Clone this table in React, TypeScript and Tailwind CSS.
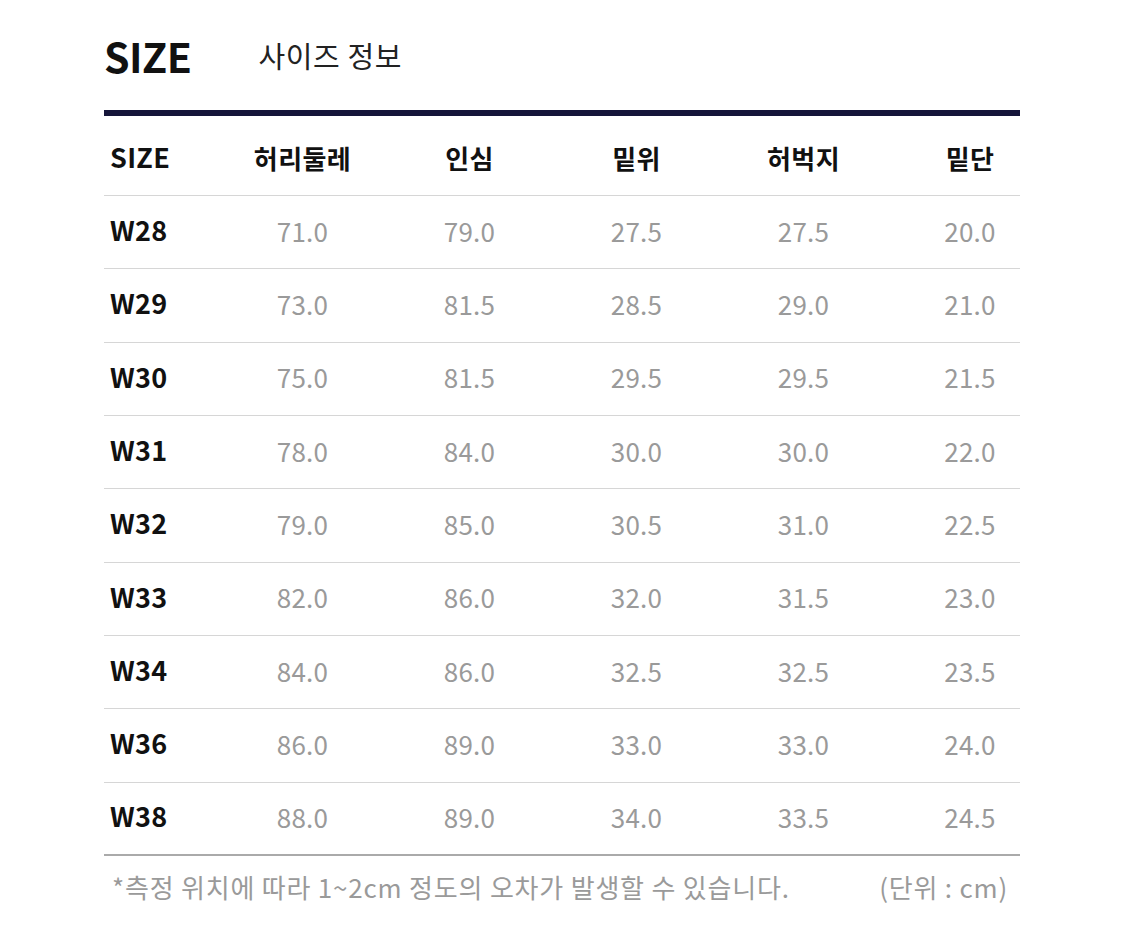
import React from "react";

const rows: [string, string, string, string, string, string][] = [
  ["W28", "71.0", "79.0", "27.5", "27.5", "20.0"],
  ["W29", "73.0", "81.5", "28.5", "29.0", "21.0"],
  ["W30", "75.0", "81.5", "29.5", "29.5", "21.5"],
  ["W31", "78.0", "84.0", "30.0", "30.0", "22.0"],
  ["W32", "79.0", "85.0", "30.5", "31.0", "22.5"],
  ["W33", "82.0", "86.0", "32.0", "31.5", "23.0"],
  ["W34", "84.0", "86.0", "32.5", "32.5", "23.5"],
  ["W36", "86.0", "89.0", "33.0", "33.0", "24.0"],
  ["W38", "88.0", "89.0", "34.0", "33.5", "24.5"],
];

const headers = ["허리둘레", "인심", "밑위", "허벅지", "밑단"];

const font = { fontFamily: '"Noto Sans CJK KR", "Noto Sans", sans-serif' };

export default function App() {
  return (
    <div className="w-[1125px] h-[950px] bg-white" style={font}>
      <div className="pl-[104px] pt-[27px] w-[1020px]">
        <div className="flex items-center h-[56px]">
          <span className="text-[41px] font-bold text-[#111] leading-none tracking-[-0.5px]">SIZE</span>
          <span className="ml-[67px] text-[29px] text-[#222] leading-none tracking-[0.6px]">사이즈 정보</span>
        </div>
        <div className="mt-[27px] h-[6px] bg-[#15153a]" />
        <div className="grid grid-cols-[115px_167px_167px_167px_167px_1fr] h-[80px] items-center border-b border-[#d6d6d6] pt-[4px]">
          <div className="pl-[6px] text-[27px] font-bold text-[#111] tracking-[0.3px]">SIZE</div>
          {headers.map((h, i) => (
            <div
              key={h}
              className={
                i === 4
                  ? "pl-[33px] text-center text-[26px] font-bold text-[#111] tracking-[0.4px]"
                  : "text-center text-[26px] font-bold text-[#111] tracking-[0.4px]"
              }
            >
              {h}
            </div>
          ))}
        </div>
        {rows.map((r, ri) => (
          <div
            key={r[0]}
            className={
              ri === rows.length - 1
                ? "grid grid-cols-[115px_167px_167px_167px_167px_1fr] h-[73.33px] items-center border-b-2 border-[#aaaaaa] pb-[4px]"
                : "grid grid-cols-[115px_167px_167px_167px_167px_1fr] h-[73.33px] items-center border-b border-[#d6d6d6] pb-[4px]"
            }
          >
            <div className="pl-[6px] text-[27px] font-bold text-[#111] tracking-[0.3px]">{r[0]}</div>
            {r.slice(1).map((v, i) => (
              <div
                key={i}
                className={
                  i === 4
                    ? "pl-[33px] text-center text-[26px] text-[#9a9a9a] tracking-[0.2px]"
                    : "text-center text-[26px] text-[#9a9a9a] tracking-[0.2px]"
                }
              >
                {v}
              </div>
            ))}
          </div>
        ))}
        <div className="flex justify-between items-center h-[62px] pl-[8px] pr-[12px] text-[26px] text-[#9a9a9a] tracking-[0.8px]">
          <span>*측정 위치에 따라 1~2cm 정도의 오차가 발생할 수 있습니다.</span>
          <span>(단위 : cm)</span>
        </div>
      </div>
    </div>
  );
}
